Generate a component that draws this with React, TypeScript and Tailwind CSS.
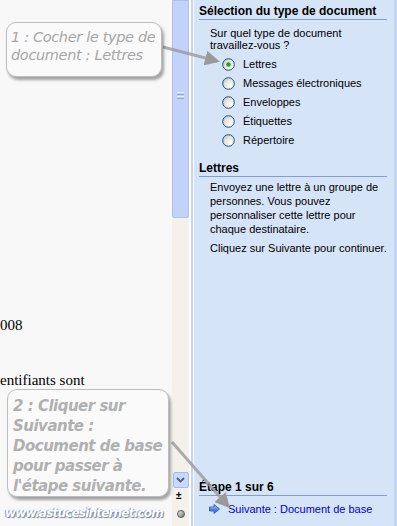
import React from 'react';

const tahoma = { fontFamily: '"Liberation Sans", Arial, sans-serif' };

function Radio({ checked }: { checked?: boolean }) {
  return (
    <svg width="13" height="13" viewBox="0 0 13 13" className="shrink-0">
      <defs>
        <radialGradient id={checked ? 'rg1' : 'rg0'} cx="0.7" cy="0.7" r="0.8">
          <stop offset="0" stopColor="#ffffff" />
          <stop offset="0.6" stopColor="#e6e6de" />
          <stop offset="1" stopColor="#c8c8bc" />
        </radialGradient>
      </defs>
      <circle cx="6.5" cy="6.5" r="5.8" fill={`url(#${checked ? 'rg1' : 'rg0'})`} stroke="#1c5180" strokeWidth="1" />
      {checked && <circle cx="6.5" cy="6.5" r="2.3" fill="#21a121" />}
    </svg>
  );
}

function Section({ title, children }: { title: string; children?: React.ReactNode }) {
  return (
    <div>
      <div className="mr-[7px] border-b border-[#7b9ee6] pb-[1px] text-[12px] font-bold leading-[14px] text-[#000]">{title}</div>
      {children}
    </div>
  );
}

export default function App() {
  const options = ['Lettres', 'Messages électroniques', 'Enveloppes', 'Étiquettes', 'Répertoire'];
  return (
    <div className="relative flex h-[526px] w-[397px] overflow-hidden bg-[#f8f8f8]">
      {/* document */}
      <div className="relative w-[172px] shrink-0 bg-[#f8f8f8] text-[15px] text-black" style={{ fontFamily: '"Liberation Serif", serif' }}>
        <div className="absolute left-0 top-[316px] leading-[18px]">008</div>
        <div className="absolute left-0 top-[371px] leading-[18px] whitespace-nowrap">entifiants sont</div>
      </div>

      {/* scrollbar */}
      <div className="flex w-[17px] shrink-0 flex-col bg-[#f3f1ea]">
        <div className="flex h-[218px] flex-col items-center justify-center rounded-b-[2px] border border-[#aebff0] bg-[#c3d2f8] pb-[28px]">
          <div className="flex flex-col gap-[1px]">
            <div className="h-[1px] w-[7px] bg-[#eef3fe]" />
            <div className="h-[1px] w-[7px] bg-[#8aa5ec]" />
            <div className="h-[1px] w-[7px] bg-[#eef3fe]" />
            <div className="h-[1px] w-[7px] bg-[#8aa5ec]" />
          </div>
        </div>
        <div className="flex-1" />
        <div className="mx-auto mb-[38px] flex h-[16px] w-[16px] items-center justify-center rounded-[2px] border border-[#a9bbee] bg-[#c9d8fb]">
          <svg width="9" height="6" viewBox="0 0 9 6">
            <path d="M1 1 L4.5 4.5 L8 1" fill="none" stroke="#4d6185" strokeWidth="1.8" />
          </svg>
        </div>
      </div>

      {/* gap */}
      <div className="w-[2px] shrink-0 bg-white" />
      <div className="w-[2px] shrink-0 bg-[#c4d4f4]" />
      <div className="w-[1px] shrink-0 bg-white" />

      {/* task pane */}
      <div className="flex flex-1 flex-col bg-[#d6e4f8] pl-[5px] pt-[4px] text-[11px] text-black" style={tahoma}>
        <Section title="Sélection du type de document">
          <div className="mt-[7px] pl-[11px] leading-[12px]">
            <div>Sur quel type de document</div>
            <div>travaillez-vous ?</div>
          </div>
          <div className="mt-[4px] flex flex-col pl-[23px]">
            {options.map((o, i) => (
              <div key={o} className="flex h-[19px] items-center gap-[8px]">
                <Radio checked={i === 0} />
                <span>{o}</span>
              </div>
            ))}
          </div>
        </Section>

        <div className="mt-[11px]">
          <Section title="Lettres">
            <div className="mt-[3px] pl-[11px] leading-[14px]">
              <div>Envoyez une lettre à un groupe de</div>
              <div>personnes. Vous pouvez</div>
              <div>personnaliser cette lettre pour</div>
              <div>chaque destinataire.</div>
              <div className="mt-[5px]">Cliquez sur Suivante pour continuer.</div>
            </div>
          </Section>
        </div>

        <div className="flex-1" />

        <div className="mb-[9px]">
          <Section title="Étape 1 sur 6">
            <div className="mt-[5px] flex items-center gap-[8px] pl-[10px] text-[#0000cc]">
              <svg width="11" height="10" viewBox="0 0 11 10">
                <path d="M0.5 3 H5 V0.5 L10.5 5 L5 9.5 V7 H0.5 Z" fill="#4f7fe0" stroke="#2a52be" strokeWidth="0.8" />
                <path d="M1.5 4 H6 V2.5 L8.5 4.8" fill="none" stroke="#a9c3f5" strokeWidth="0.8" />
              </svg>
              <span>Suivante : Document de base</span>
            </div>
          </Section>
        </div>
      </div>
      <div className="w-[3px] shrink-0 bg-[#c3d3f2]" />

      {/* scrollbar small icons */}
      <div className="absolute left-[176px] top-[491px] text-[10px] font-bold leading-[10px] text-black" style={tahoma}>±</div>
      <div className="absolute left-[177px] top-[510px] h-[8px] w-[8px] rounded-full border border-[#555] bg-gradient-to-br from-[#eee] to-[#777]" />

      {/* arrows */}
      <svg className="pointer-events-none absolute left-0 top-0" width="397" height="526">
        <defs>
          <marker id="ah" markerWidth="5" markerHeight="5" refX="4" refY="2.5" orient="auto">
            <path d="M0 0 L5 2.5 L0 5 Z" fill="#9a9a9a" />
          </marker>
        </defs>
        <line x1="163" y1="47" x2="217" y2="61" stroke="#9a9a9a" strokeOpacity="0.8" strokeWidth="3" markerEnd="url(#ah)" />
        <line x1="172" y1="442" x2="228" y2="506" stroke="#9a9a9a" strokeOpacity="0.8" strokeWidth="3" markerEnd="url(#ah)" />
      </svg>

      {/* callouts */}
      <div
        className="absolute left-[6px] top-[22px] h-[55px] w-[156px] rounded-[10px] border border-[#bdbdbd] bg-[#fafafa] px-[4px] pt-[5px] text-[14.5px] italic leading-[18px] tracking-[-0.35px] text-[#a6a6a6] shadow-[2px_3px_3px_rgba(0,0,0,0.35)]"
        style={{ fontFamily: '"DejaVu Sans", Verdana, sans-serif' }}
      >
        <div className="whitespace-nowrap">1 : Cocher le type de</div>
        <div className="whitespace-nowrap">document : Lettres</div>
      </div>
      <div
        className="absolute left-[7px] top-[389px] h-[108px] w-[162px] rounded-[10px] border border-[#bdbdbd] bg-[#fafafa] px-[5px] pt-[6px] text-[15px] font-bold italic leading-[20px] text-[#b0b0b0] shadow-[2px_3px_3px_rgba(0,0,0,0.35)]"
        style={{ fontFamily: '"DejaVu Sans", Verdana, sans-serif' }}
      >
        <div className="whitespace-nowrap tracking-[-0.5px]">2 : Cliquer sur</div>
        <div className="whitespace-nowrap tracking-[-0.5px]">Suivante :</div>
        <div className="whitespace-nowrap tracking-[-0.5px]">Document de base</div>
        <div className="whitespace-nowrap tracking-[-0.5px]">pour passer à</div>
        <div className="whitespace-nowrap tracking-[-0.5px]">l'étape suivante.</div>
      </div>

      {/* watermark */}
      <div
        className="absolute left-[5px] top-[506px] text-[12px] font-bold italic leading-[14px] tracking-[-0.8px] text-white"
        style={{ fontFamily: '"DejaVu Sans", Verdana, sans-serif', textShadow: '1px 1px 1px #6f7fa0, -1px 0 1px #8a9ab8' }}
      >
        www.astucesinternet.com
      </div>
    </div>
  );
}
